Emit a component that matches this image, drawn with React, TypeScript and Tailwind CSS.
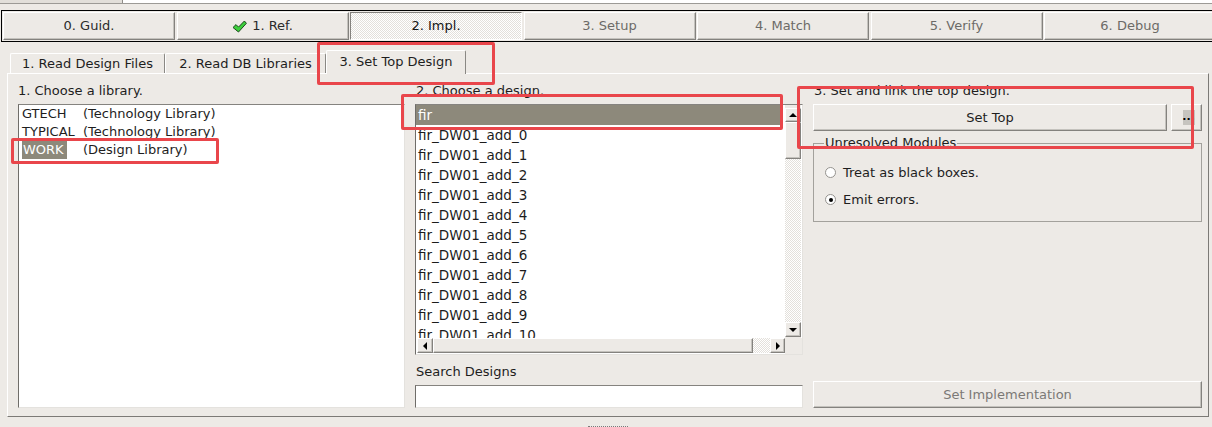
import React from "react";

const steps = [
  { label: "0. Guid.", state: "enabled" },
  { label: "1. Ref.", state: "done" },
  { label: "2. Impl.", state: "active" },
  { label: "3. Setup", state: "disabled" },
  { label: "4. Match", state: "disabled" },
  { label: "5. Verify", state: "disabled" },
  { label: "6. Debug", state: "disabled" },
];

const designs = [
  "fir",
  "fir_DW01_add_0",
  "fir_DW01_add_1",
  "fir_DW01_add_2",
  "fir_DW01_add_3",
  "fir_DW01_add_4",
  "fir_DW01_add_5",
  "fir_DW01_add_6",
  "fir_DW01_add_7",
  "fir_DW01_add_8",
  "fir_DW01_add_9",
  "fir_DW01_add_10",
];

const raised =
  "border border-t-white border-l-white border-r-[#84827e] border-b-[#84827e] shadow-[inset_-1px_-1px_0_#c4c2bd]";
const sunken =
  "border border-t-[#85837f] border-l-[#6f6d69] border-r-[#e4e2de] border-b-[#e4e2de]";
const stipple =
  "bg-[repeating-conic-gradient(#ffffff_0_25%,#e3e0db_0_50%)] bg-[length:2px_2px]";

function Arrow({ dir }: { dir: "up" | "down" | "left" | "right" }) {
  const vertical = dir === "up" || dir === "down";
  const points = {
    up: "0,5 4,1 8,5",
    down: "0,1 4,5 8,1",
    left: "5,0 1,4 5,8",
    right: "1,0 5,4 1,8",
  }[dir];
  return (
    <svg
      width={vertical ? 8 : 6}
      height={vertical ? 6 : 8}
      viewBox={vertical ? "0 0 8 6" : "0 0 6 8"}
    >
      <polygon points={points} fill="#000" />
    </svg>
  );
}

function CheckMark() {
  return (
    <svg width="15" height="13" viewBox="0 0 15 13">
      <path
        d="M1 7.5 L4 4.6 L6.5 7.1 L12.4 1 L14.4 3.3 L6.5 12 Z"
        fill="#3ccf3c"
        stroke="#1d4a1d"
        strokeWidth="1"
        strokeLinejoin="round"
      />
    </svg>
  );
}

function StepBar() {
  return (
    <div className="ml-[1px] flex h-[32px] w-[1230px] gap-[1.5px] border border-black p-[1px]">
      {steps.map((s) => (
        <div
          key={s.label}
          className={
            s.state === "active"
              ? `flex h-full w-[172px] shrink-0 items-center justify-center text-[#151515] ${stipple} border border-t-[#84827e] border-l-[#84827e] border-r-white border-b-white`
              : `flex h-full w-[172px] shrink-0 items-center justify-center gap-[5px] bg-[#edeae6] ${raised} ${
                  s.state === "disabled" ? "text-[#6c6a67]" : "text-[#2b2b2b]"
                }`
          }
        >
          {s.state === "done" && <CheckMark />}
          <span>{s.label}</span>
        </div>
      ))}
    </div>
  );
}

function LibraryList() {
  const rows = [
    { name: "GTECH", kind: "(Technology Library)" },
    { name: "TYPICAL", kind: "(Technology Library)" },
    { name: "WORK", kind: "(Design Library)", selected: true },
  ];
  return (
    <div className={`mt-[5px] flex-1 bg-white pl-[3px] ${sunken}`}>
      {rows.map((r) => (
        <div key={r.name} className="flex h-[18px] items-center leading-[18px]">
          <span className="w-[61px] shrink-0">
            {r.selected ? (
              <span className="inline-block w-[45px] bg-[#8d897b] pl-[1px] text-white">
                {r.name}
              </span>
            ) : (
              <span>{r.name}</span>
            )}
          </span>
          <span>{r.kind}</span>
        </div>
      ))}
    </div>
  );
}

function DesignList() {
  return (
    <div className={`mt-[5px] flex h-[251px] flex-col bg-white ${sunken}`}>
      <div className="flex h-[233px]">
        <div className="w-[369px] overflow-hidden pr-[5px] text-[13.5px]">
          {designs.map((d, i) => (
            <div
              key={d}
              className={`h-[20px] pl-[2px] leading-[20px] ${
                i === 0 ? "bg-[#8d897b] text-white" : "text-[#1c1c1c]"
              }`}
            >
              {d}
            </div>
          ))}
        </div>
        <div className="flex w-[16px] flex-col bg-[#edeae6] pt-[3px] pb-[1px]">
          <div className={`flex h-[14px] items-center justify-center bg-[#edeae6] ${raised}`}>
            <Arrow dir="up" />
          </div>
          <div className={`h-[37px] bg-[#edeae6] ${raised}`} />
          <div className={`flex-1 ${stipple}`} />
          <div className={`flex h-[15px] items-center justify-center bg-[#edeae6] ${raised}`}>
            <Arrow dir="down" />
          </div>
        </div>
      </div>
      <div className="flex h-[16px]">
        <div className="flex w-[369px] pl-[1px] pb-[1px]">
          <div className={`flex w-[16px] items-center justify-center bg-[#edeae6] ${raised}`}>
            <Arrow dir="left" />
          </div>
          <div className={`w-[320px] bg-[#edeae6] ${raised}`} />
          <div className={`flex-1 ${stipple}`} />
          <div className={`flex w-[15px] items-center justify-center bg-[#edeae6] ${raised}`}>
            <Arrow dir="right" />
          </div>
        </div>
        <div className="flex-1 bg-[#edeae6]" />
      </div>
    </div>
  );
}

function Radio({ label, checked }: { label: string; checked?: boolean }) {
  return (
    <div className="flex h-[27px] items-center gap-[7px] pl-[11px]">
      <span className="flex h-[11px] w-[11px] items-center justify-center rounded-full border border-[#95938f] bg-white">
        {checked && <span className="h-[4px] w-[4px] rounded-full bg-black" />}
      </span>
      <span>{label}</span>
    </div>
  );
}

function TopDesignColumn() {
  return (
    <div className="flex flex-col">
      <div className="h-[16px] pl-[1px]">3. Set and link the top design.</div>
      <div className="mt-[5px] flex h-[27px] gap-[4px]">
        <button
          type="button"
          className={`flex-1 bg-[#edeae6] text-[#1e1e1e] ${raised}`}
        >
          Set Top
        </button>
        <button
          type="button"
          className={`flex w-[31px] items-center justify-center bg-[#edeae6] ${raised}`}
        >
          <span className="ml-[4px] flex h-[15px] w-[12px] items-end justify-center bg-[#c6c4bf] pb-[3px] text-[11px] leading-none font-bold text-black">
            ...
          </span>
        </button>
      </div>
      <fieldset className="mt-[4px] h-[87px] border border-[#a3a19c] pt-[8px]">
        <legend className="ml-[10px] px-[1px] leading-[16px]">Unresolved Modules</legend>
        <Radio label="Treat as black boxes." />
        <Radio label="Emit errors." checked />
      </fieldset>
      <button
        type="button"
        className={`mt-auto h-[27px] bg-[#edeae6] text-[#7b7976] ${raised}`}
      >
        Set Implementation
      </button>
    </div>
  );
}

function Notebook() {
  const tab =
    "flex items-center justify-center border-t border-l border-r border-t-white border-l-white border-r-[#8a8884] rounded-t-[2px] bg-[#edeae6]";
  return (
    <div className="mt-[8px] ml-[7px] w-[1202px]">
      <div className="flex h-[23px] items-end pl-[3px]">
        <div className={`${tab} h-[20px] w-[155px]`}>1. Read Design Files</div>
        <div className={`${tab} h-[20px] w-[161px]`}>2. Read DB Libraries</div>
        <div className={`${tab} relative z-10 -mb-[1px] h-[24px] w-[140px] pb-[2px]`}>
          3. Set Top Design
        </div>
      </div>
      <div className="grid h-[344px] grid-cols-[387px_388px_389px] gap-x-[10px] border border-t-white border-l-white border-r-[#7c7a76] border-b-[#7c7a76] pt-[9px] pr-[6px] pb-[8px] pl-[10px]">
        <div className="flex flex-col">
          <div className="h-[16px]">1. Choose a library.</div>
          <LibraryList />
        </div>
        <div className="flex flex-col">
          <div className="h-[16px] pl-[1px]">2. Choose a design.</div>
          <DesignList />
          <div className="mt-[9px] h-[16px] pl-[1px]">Search Designs</div>
          <div className={`mt-[5px] h-[23px] bg-white ${sunken}`} />
        </div>
        <TopDesignColumn />
      </div>
    </div>
  );
}

export default function App() {
  return (
    <div className="relative h-[427px] w-[1212px] overflow-hidden bg-[#edeae6] font-['DejaVu_Sans',sans-serif] text-[13px] leading-[16px] text-[#1e1e1e]">
      <div className="h-[10px]">
        <div className="flex h-[4px] border-b border-[#9c9a96]">
          <div className="w-[123px] border-r border-[#8e8c88] bg-[#e2dfda]" />
          <div className="flex-1 bg-white" />
        </div>
      </div>
      <StepBar />
      <Notebook />
      <div className="mt-[9px] flex justify-center pl-[3px]">
        <div className="w-[40px] border-t border-dotted border-[#7a7a7a]" />
      </div>

      {/* red annotation boxes */}
      <div className="pointer-events-none absolute top-[42px] left-[317px] h-[43px] w-[178px] rounded-[2px] border-[3px] border-[#e9464b]" />
      <div className="pointer-events-none absolute top-[138px] left-[11px] h-[26px] w-[208px] rounded-[2px] border-[3px] border-[#e9464b]" />
      <div className="pointer-events-none absolute top-[94px] left-[401px] h-[36px] w-[382px] rounded-[2px] border-[3px] border-[#e9464b]" />
      <div className="pointer-events-none absolute top-[86px] left-[797px] h-[63px] w-[397px] rounded-[2px] border-[3px] border-[#e9464b]" />
    </div>
  );
}
